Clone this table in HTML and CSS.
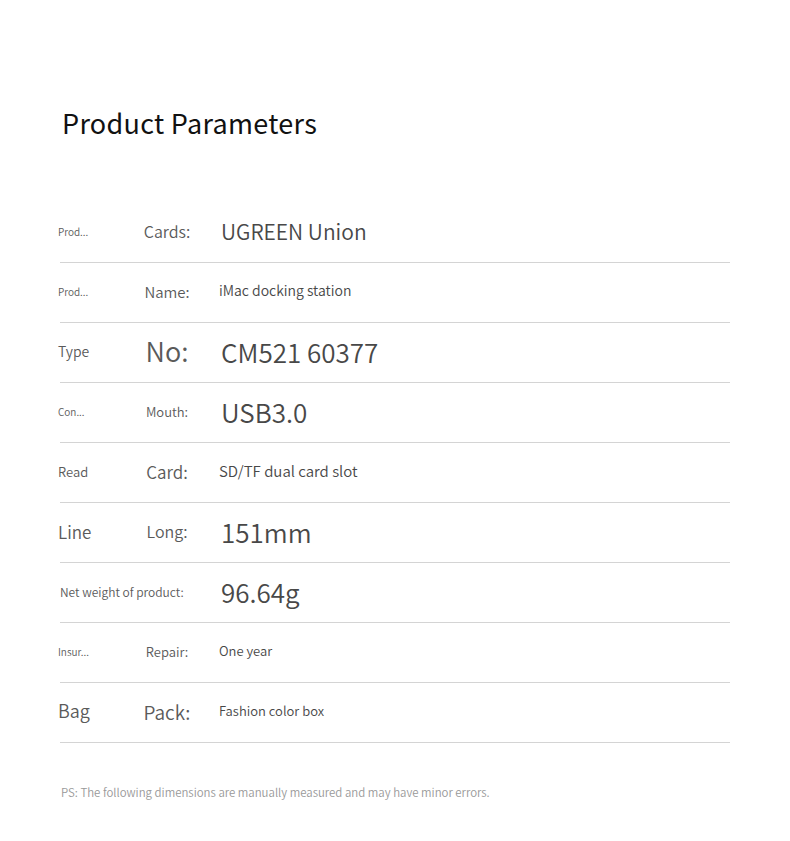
FILE: index.html
```html
<!DOCTYPE html>
<html lang="en">
<head>
<meta charset="utf-8">
<title>Product Parameters</title>
<link rel="stylesheet" href="styles.css">
</head>
<body>
<main class="page">
  <h1 class="title">Product Parameters</h1>
  <div class="params">
    <div class="row">
      <span class="k1 s10">Prod...</span>
      <span class="k2 s16">Cards:</span>
      <span class="v s21">UGREEN Union</span>
    </div>
    <div class="row">
      <span class="k1 s10">Prod...</span>
      <span class="k2 s15">Name:</span>
      <span class="v s14 vl">iMac docking station</span>
    </div>
    <div class="row">
      <span class="k1 s14">Type</span>
      <span class="k2 s27 up">No:</span>
      <span class="v s26">CM521 60377</span>
    </div>
    <div class="row">
      <span class="k1 s10">Con...</span>
      <span class="k2 s13">Mouth:</span>
      <span class="v s26">USB3.0</span>
    </div>
    <div class="row">
      <span class="k1 s13">Read</span>
      <span class="k2 s17">Card:</span>
      <span class="v s15 vl">SD/TF dual card slot</span>
    </div>
    <div class="row">
      <span class="k1 s17">Line</span>
      <span class="k2 s16">Long:</span>
      <span class="v s26">151mm</span>
    </div>
    <div class="row">
      <span class="kwide s12">Net weight of product:</span>
      <span class="v s26">96.64g</span>
    </div>
    <div class="row">
      <span class="k1 s10">Insur...</span>
      <span class="k2 s13">Repair:</span>
      <span class="v s13 vl">One year</span>
    </div>
    <div class="row">
      <span class="k1 s18 up">Bag</span>
      <span class="k2 s19">Pack:</span>
      <span class="v s13 vl">Fashion color box</span>
    </div>
  </div>
  <p class="note">PS: The following dimensions are manually measured and may have minor errors.</p>
</main>
</body>
</html>
```
FILE: styles.css
```css
html, body {
  margin: 0;
  padding: 0;
  background: #fff;
}
body {
  font-family: "Noto Sans CJK SC", "Noto Sans", sans-serif;
  font-weight: 350;
  color: #555;
}
.page {
  width: 790px;
  padding: 103px 0 0 60px;
  box-sizing: border-box;
}
.title {
  margin: 0 0 0 2px;
  font-size: 27px;
  font-weight: 400;
  line-height: 40px;
  color: #111;
  letter-spacing: 0.3px;
}
.params {
  margin-top: 60px;
  width: 670px;
}
.row {
  display: grid;
  grid-template-columns: 78px 58px 1fr;
  align-items: center;
  height: 60px;
  padding-bottom: 3px;
  border-bottom: 1px solid #d4d4d4;
  box-sizing: border-box;
}
.k1 {
  margin-left: -2px;
  color: #5a5a5a;
  white-space: nowrap;
}
.k2 {
  text-align: center;
  color: #5a5a5a;
  white-space: nowrap;
}
.up {
  margin-bottom: 2px;
}
.kwide {
  grid-column: 1 / 3;
  color: #5a5a5a;
  white-space: nowrap;
}
.v {
  padding-left: 25px;
  color: #484848;
  white-space: nowrap;
}
.vl {
  padding-left: 23px;
  margin-top: -2px;
}
.s10 { font-size: 10px; }
.s12 { font-size: 12px; }
.s13 { font-size: 13px; }
.s14 { font-size: 14px; }
.s15 { font-size: 15px; }
.s16 { font-size: 16px; }
.s17 { font-size: 17px; }
.s18 { font-size: 18px; }
.s19 { font-size: 19px; }
.s21 { font-size: 21px; }
.s26 { font-size: 26px; }
.s27 { font-size: 27px; }
.s28 { font-size: 28px; }
.note {
  margin: 41px 0 0 1px;
  font-size: 11.45px;
  color: #999;
}
```
